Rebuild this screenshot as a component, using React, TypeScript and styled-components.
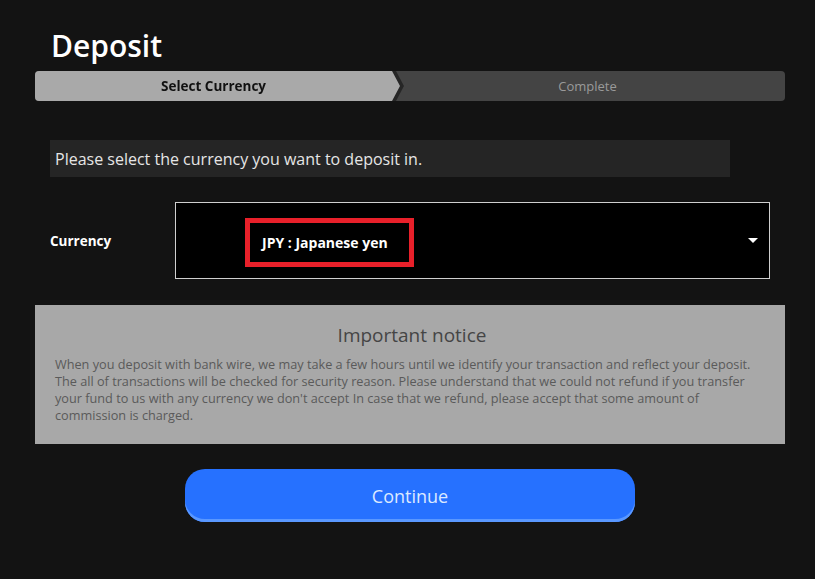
import styled, { createGlobalStyle } from 'styled-components';

const GlobalStyle = createGlobalStyle`
  html, body {
    margin: 0;
    padding: 0;
    background-color: #131313;
  }
  body {
    font-family: 'Open Sans', 'Noto Sans', sans-serif;
  }
`;

const App = () => {
  return (
    <>
      <GlobalStyle />
      <Page>
        <Title>Deposit</Title>
        <Stepper>
          <StepShadow>
            <StepActive>Select Currency</StepActive>
          </StepShadow>
          <StepRest>Complete</StepRest>
        </Stepper>

        <Instruction>Please select the currency you want to deposit in.</Instruction>

        <FieldRow>
          <Label>Currency</Label>
          <SelectBox>
            <Highlight>JPY : Japanese yen</Highlight>
            <Caret />
          </SelectBox>
        </FieldRow>

        <Notice>
          <NoticeTitle>Important notice</NoticeTitle>
          <NoticeBody>
            When you deposit with bank wire, we may take a few hours until we identify your
            transaction and reflect your deposit. The all of transactions will be checked for
            security reason. Please understand that we could not refund if you transfer your fund
            to us with any currency we don't accept In case that we refund, please accept that
            some amount of commission is charged.
          </NoticeBody>
        </Notice>

        <ButtonRow>
          <ContinueBtn>Continue</ContinueBtn>
        </ButtonRow>
      </Page>
    </>
  );
};

export default App;

const Page = styled.div`
  width: 750px;
  padding: 26px 0 40px 35px;
  display: flex;
  flex-direction: column;
`;

const Title = styled.h1`
  margin: 0 0 0 16px;
  font-size: 30px;
  font-weight: 600;
  color: #ffffff;
  line-height: 40px;
  height: 45px;
`;

const Stepper = styled.div`
  height: 30px;
  display: flex;
  background-color: #444444;
  border-radius: 4px;
  overflow: hidden;
`;

const StepShadow = styled.div`
  width: 365px;
  height: 100%;
  flex-shrink: 0;
  filter: drop-shadow(4px 0 0 #262626);
`;

const StepActive = styled.div`
  height: 100%;
  background-color: #a9a9a9;
  clip-path: polygon(0 0, calc(100% - 8px) 0, 100% 50%, calc(100% - 8px) 100%, 0 100%);
  display: flex;
  align-items: center;
  justify-content: center;
  padding-right: 8px;
  box-sizing: border-box;
  font-size: 13.5px;
  font-weight: 700;
  color: #111111;
`;

const StepRest = styled.div`
  flex: 1;
  display: flex;
  align-items: center;
  justify-content: center;
  padding-right: 10px;
  font-size: 13px;
  color: #9a9a9a;
`;

const Instruction = styled.div`
  margin: 39px 0 0 15px;
  width: 680px;
  height: 37px;
  box-sizing: border-box;
  padding-left: 5px;
  background-color: #252525;
  display: flex;
  align-items: center;
  font-size: 16px;
  color: #e6e6e6;
`;

const FieldRow = styled.div`
  margin-top: 25px;
  display: flex;
  align-items: center;
`;

const Label = styled.div`
  width: 140px;
  padding-left: 15px;
  box-sizing: border-box;
  font-size: 13.5px;
  font-weight: 700;
  color: #ffffff;
`;

const SelectBox = styled.div`
  position: relative;
  width: 595px;
  height: 77px;
  box-sizing: border-box;
  border: 1px solid #cfcfcf;
  background-color: #000000;
  display: flex;
  align-items: center;
  padding-left: 69px;
`;

const Highlight = styled.span`
  display: inline-flex;
  align-items: center;
  height: 49px;
  box-sizing: border-box;
  padding: 0 21px 0 12px;
  border: 5px solid #e8202a;
  font-size: 14px;
  font-weight: 700;
  color: #ffffff;
  margin-top: 4px;
`;

const Caret = styled.span`
  position: absolute;
  right: 11px;
  top: 35px;
  width: 0;
  height: 0;
  border-left: 5px solid transparent;
  border-right: 5px solid transparent;
  border-top: 5px solid #ffffff;
`;

const Notice = styled.div`
  margin-top: 26px;
  height: 139px;
  box-sizing: border-box;
  background-color: #a8a8a8;
  padding: 18px 16px 0 20px;
`;

const NoticeTitle = styled.div`
  text-align: center;
  font-size: 19px;
  color: #454545;
  line-height: 24px;
`;

const NoticeBody = styled.p`
  margin: 9px 0 0 0;
  font-size: 12.7px;
  line-height: 17px;
  color: #5a5a5a;
`;

const ButtonRow = styled.div`
  margin-top: 25px;
  display: flex;
  justify-content: center;
`;

const ContinueBtn = styled.button`
  width: 450px;
  height: 53px;
  border: none;
  border-radius: 20px;
  background-color: #2671ff;
  box-shadow: inset 0 -3px 0 #5a98ff;
  color: #dce9ff;
  font-family: 'Open Sans', 'Noto Sans', sans-serif;
  font-size: 18px;
  cursor: pointer;
`;
